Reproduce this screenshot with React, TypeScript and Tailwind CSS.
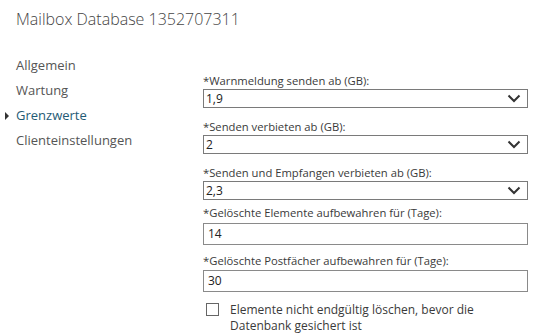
import React from "react";

const font = { fontFamily: '"Open Sans", "Noto Sans", sans-serif' };

function Chevron() {
  return (
    <svg width="14" height="9" viewBox="0 0 14 9" className="shrink-0">
      <path d="M1.5 1.5 L7 7 L12.5 1.5" fill="none" stroke="#333" strokeWidth="2" />
    </svg>
  );
}

function SelectBox({ value }: { value: string }) {
  return (
    <div className="flex h-[19px] w-[325px] items-center justify-between border border-[#7a7a7a] pl-[2px] pr-[6px] text-[12px] leading-none text-[#222]">
      <span>{value}</span>
      <Chevron />
    </div>
  );
}

function TextBox({ value }: { value: string }) {
  return (
    <div className="flex h-[22px] w-[325px] items-center border border-[#8a8a8a] pl-[4px] text-[12px] leading-none text-[#222]">
      {value}
    </div>
  );
}

export default function App() {
  const nav = ["Allgemein", "Wartung", "Grenzwerte", "Clienteinstellungen"];
  return (
    <div className="h-[334px] w-[536px] overflow-hidden bg-white" style={font}>
      <div className="pl-[16px] pt-[7px] text-[16px] font-light leading-[24px] text-[#444]">
        Mailbox Database 1352707311
      </div>
      <div className="flex">
        <div className="w-[203px] pt-[22px]">
          {nav.map((n) => (
            <div
              key={n}
              className={`relative pl-[16px] text-[13px] leading-[25px] ${
                n === "Grenzwerte" ? "text-[#1f5b75]" : "text-[#555]"
              }`}
            >
              {n === "Grenzwerte" && (
                <span className="absolute left-[5px] top-[9px] h-0 w-0 border-y-[4px] border-l-[4px] border-y-transparent border-l-[#333]" />
              )}
              {n}
            </div>
          ))}
        </div>
        <div className="pt-[42px] text-[11.25px] leading-[16px] text-[#3a3a3a]">
          <div>*Warnmeldung senden ab (GB):</div>
          <SelectBox value="1,9" />
          <div className="mt-[11px]">*Senden verbieten ab (GB):</div>
          <SelectBox value="2" />
          <div className="mt-[11px]">*Senden und Empfangen verbieten ab (GB):</div>
          <SelectBox value="2,3" />
          <div className="mt-[5px] mb-[2px]">*Gelöschte Elemente aufbewahren für (Tage):</div>
          <TextBox value="14" />
          <div className="mt-[8px] mb-[1px]">*Gelöschte Postfächer aufbewahren für (Tage):</div>
          <TextBox value="30" />
          <div className="mt-[10px] flex items-start">
            <span className="ml-[3px] mt-[1px] h-[13px] w-[13px] shrink-0 border border-[#666]" />
            <span className="ml-[11px] text-[12px] leading-[16px]">
              Elemente nicht endgültig löschen, bevor die
              <br />
              Datenbank gesichert ist
            </span>
          </div>
        </div>
      </div>
    </div>
  );
}
